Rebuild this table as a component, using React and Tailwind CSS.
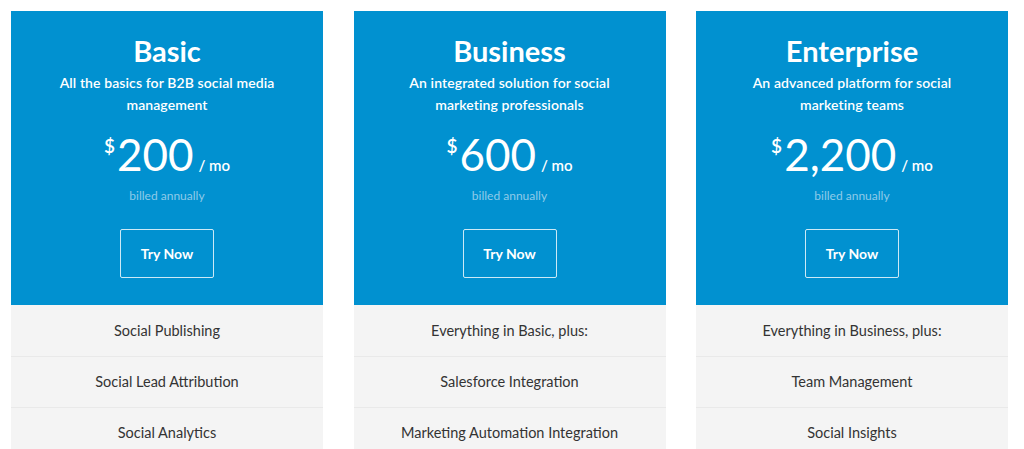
import React from 'react';

const plans = [
    {
        name: 'Basic',
        blurb: 'All the basics for B2B social media management',
        price: '200',
        features: ['Social Publishing', 'Social Lead Attribution', 'Social Analytics'],
    },
    {
        name: 'Business',
        blurb: 'An integrated solution for social marketing professionals',
        price: '600',
        features: ['Everything in Basic, plus:', 'Salesforce Integration', 'Marketing Automation Integration'],
    },
    {
        name: 'Enterprise',
        blurb: 'An advanced platform for social marketing teams',
        price: '2,200',
        features: ['Everything in Business, plus:', 'Team Management', 'Social Insights'],
    },
];

const PlanCard = ({ plan }) => {
    return (
        <div className="w-[312px] shrink-0 flex flex-col">
            {/* Blue header */}
            <div className="bg-[#0191d0] text-white text-center h-[294px] shrink-0 pt-[23px]">
                <h2 className="text-[29px] leading-[34px] font-bold">{plan.name}</h2>
                <p className="mt-[4px] mx-auto max-w-[240px] text-[14px] leading-[22px] font-semibold tracking-[0.1px]">
                    {plan.blurb}
                </p>
                <div className="mt-[18px] flex items-start justify-center">
                    <span className="text-[19px] leading-none font-semibold mt-[2px] mr-[2px]">$</span>
                    <span className="text-[44px] leading-[40px] font-normal">{plan.price}</span>
                    <span className="text-[15px] font-semibold self-end leading-none mb-[1px] ml-[5px]">/ mo</span>
                </div>
                <p className="mt-[14px] text-[12px] leading-[16px] text-[#8fcbe9]">billed annually</p>
                <button className="mt-[25px] w-[94px] h-[49px] border border-white/80 rounded-[2px] text-[14px] font-bold">
                    Try Now
                </button>
            </div>
            {/* Feature rows */}
            <ul className="bg-[#f4f4f4] text-[#333] text-[14.5px] text-center">
                {plan.features.map((f, i) => (
                    <li
                        key={f}
                        className={`h-[51px] flex items-center justify-center ${i > 0 ? 'border-t border-[#e9e9e9]' : ''}`}
                    >
                        {f}
                    </li>
                ))}
            </ul>
        </div>
    );
};

const App = () => {
    return (
        <div
            className="w-[1024px] h-[449px] overflow-hidden bg-white flex gap-[30.5px] pl-[11px] pt-[11px]"
            style={{ fontFamily: 'Lato, "Open Sans", sans-serif' }}
        >
            {plans.map((p) => (
                <PlanCard key={p.name} plan={p} />
            ))}
        </div>
    );
};

export default App;
